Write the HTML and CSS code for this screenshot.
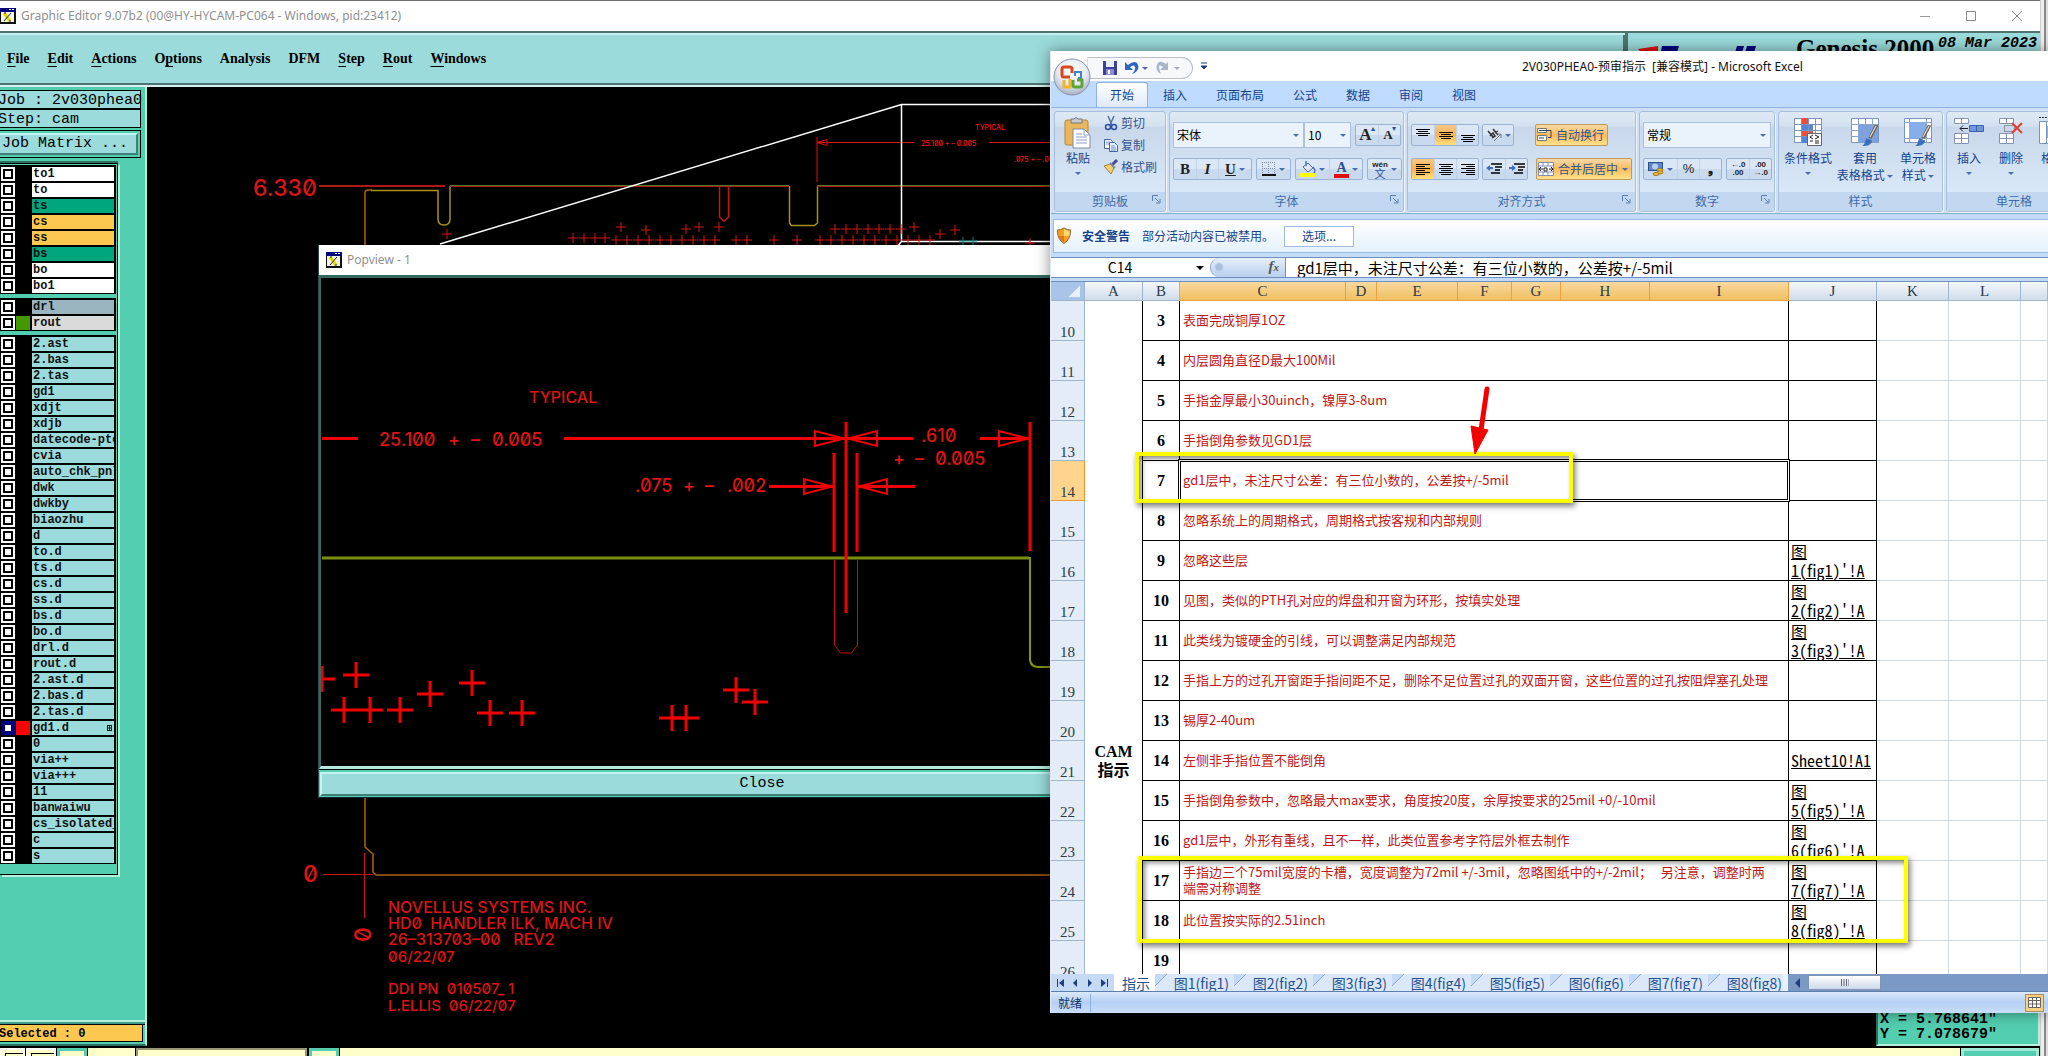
FILE: index.html
```html
<!DOCTYPE html>
<html lang="zh-CN">
<head>
<meta charset="utf-8">
<title>Graphic Editor</title>
<link rel="stylesheet" href="styles.css">
</head>
<body>
<svg width="0" height="0" class="defs" aria-hidden="true">
  <defs>
    <symbol id="xwin" viewBox="0 0 16 16"><rect width="16" height="16" fill="#111"/><rect x="0" y="0" width="15" height="4" fill="#00007a"/><path d="M9 1h2v1H9zM12 1h2v1h-2z" fill="#fff"/><rect x="1" y="4" width="13" height="10" fill="#f4f4e4"/><path d="M4 5l6 8" stroke="#e0d800" stroke-width="3"/><path d="M11 5l-7 8M4 5h2M9 13h2" stroke="#222" fill="none"/></symbol>
    <symbol id="launch" viewBox="0 0 9 9"><path d="M.5 6V.5H6" stroke="#5b7fae" fill="none"/><path d="M3 3l4 4M8 4v4H4" stroke="#5b7fae" fill="none"/></symbol>
    <symbol id="brush" viewBox="0 0 14 20"><path d="M13 0L7 12" stroke="#6d6456" stroke-width="3"/><path d="M12.500 1L7 11" stroke="#e8e2d4"/><path d="M4 12l5 2c-1 4-4 5-9 5 3-2 2-5 4-7z" fill="#3b6fb8"/></symbol>
    <marker id="plus" markerUnits="userSpaceOnUse" markerWidth="12" markerHeight="14" refX="6" refY="7"><path d="M1 7h10M6 2v10" stroke="#d81414"/></marker>
    <marker id="bigplus" markerUnits="userSpaceOnUse" markerWidth="28" markerHeight="28" refX="14" refY="14"><path d="M1 14h26M14 1v26" stroke="#f00000" stroke-width="3"/></marker>
  </defs>
</svg>

<div class="desktop">
  <div class="genesis">
    <header class="titlebar">
      <svg class="xicon"><use href="#xwin"/></svg>
      <span class="wintitle">Graphic Editor 9.07b2 (00@HY-HYCAM-PC064 - Windows, pid:23412)</span>
      <div class="controls">
        <button aria-label="Minimize"><svg width="12" height="12"><path d="M1 6.500h10" stroke="#999"/></svg></button>
        <button aria-label="Maximize"><svg width="12" height="12"><path d="M1.500 1.500h9v9h-9z" stroke="#888" fill="none"/></svg></button>
        <button aria-label="Close"><svg width="12" height="12"><path d="M1 1l10 10M11 1L1 11" stroke="#888"/></svg></button>
      </div>
    </header>
    <div class="topbar">
      <nav class="menubar">
        <button><u>F</u>ile</button><button><u>E</u>dit</button><button><u>A</u>ctions</button><button>O<u>p</u>tions</button><button>Analysis</button><button>DFM</button><button><u>S</u>tep</button><button><u>R</u>out</button><button><u>W</u>indows</button>
      </nav>
      <div class="brand">
        <svg class="logo" width="130" height="20" viewBox="0 0 130 20"><path d="M4 13L24 10v10H10z" fill="#e01010"/><path d="M28 10h17l-3 10H26zM103 10h7l-3 10h-7zM113 10h9l-3 10h-9z" fill="#000080"/></svg>
        <strong class="product">Genesis 2000</strong>
        <span class="date">08 Mar 2023</span>
      </div>
    </div>
    <div class="main">
      <aside class="side">
        <div class="field">Job : 2v030phea0</div>
        <div class="field">Step: cam</div>
        <div class="matrix"><button>Job Matrix ...</button></div>
        <div class="layers">
          <div class="group">
            <label class="layer white"><input type="checkbox"><i></i><span>to1</span></label>
            <label class="layer white"><input type="checkbox"><i></i><span>to</span></label>
            <label class="layer green"><input type="checkbox"><i></i><span>ts</span></label>
            <label class="layer amber"><input type="checkbox"><i></i><span>cs</span></label>
            <label class="layer amber"><input type="checkbox"><i></i><span>ss</span></label>
            <label class="layer green"><input type="checkbox"><i></i><span>bs</span></label>
            <label class="layer white"><input type="checkbox"><i></i><span>bo</span></label>
            <label class="layer white"><input type="checkbox"><i></i><span>bo1</span></label>
          </div>
          <div class="group">
            <label class="layer slate"><input type="checkbox"><i></i><span>drl</span></label>
            <label class="layer grey"><input type="checkbox"><i class="lime"></i><span>rout</span></label>
          </div>
          <div class="group">
            <label class="layer"><input type="checkbox"><i></i><span>2.ast</span></label>
            <label class="layer"><input type="checkbox"><i></i><span>2.bas</span></label>
            <label class="layer"><input type="checkbox"><i></i><span>2.tas</span></label>
            <label class="layer"><input type="checkbox"><i></i><span>gd1</span></label>
            <label class="layer"><input type="checkbox"><i></i><span>xdjt</span></label>
            <label class="layer"><input type="checkbox"><i></i><span>xdjb</span></label>
            <label class="layer"><input type="checkbox"><i></i><span>datecode-pte</span></label>
            <label class="layer"><input type="checkbox"><i></i><span>cvia</span></label>
            <label class="layer"><input type="checkbox"><i></i><span>auto_chk_pnl</span></label>
            <label class="layer"><input type="checkbox"><i></i><span>dwk</span></label>
            <label class="layer"><input type="checkbox"><i></i><span>dwkby</span></label>
            <label class="layer"><input type="checkbox"><i></i><span>biaozhu</span></label>
            <label class="layer"><input type="checkbox"><i></i><span>d</span></label>
            <label class="layer"><input type="checkbox"><i></i><span>to.d</span></label>
            <label class="layer"><input type="checkbox"><i></i><span>ts.d</span></label>
            <label class="layer"><input type="checkbox"><i></i><span>cs.d</span></label>
            <label class="layer"><input type="checkbox"><i></i><span>ss.d</span></label>
            <label class="layer"><input type="checkbox"><i></i><span>bs.d</span></label>
            <label class="layer"><input type="checkbox"><i></i><span>bo.d</span></label>
            <label class="layer"><input type="checkbox"><i></i><span>drl.d</span></label>
            <label class="layer"><input type="checkbox"><i></i><span>rout.d</span></label>
            <label class="layer"><input type="checkbox"><i></i><span>2.ast.d</span></label>
            <label class="layer"><input type="checkbox"><i></i><span>2.bas.d</span></label>
            <label class="layer"><input type="checkbox"><i></i><span>2.tas.d</span></label>
            <label class="layer"><input type="checkbox" checked><i class="red"></i><span class="work">gd1.d<svg width="5" height="6"><path d="M0 .5h5M0 3h5M0 5.500h5M.5 0v6M2.500 0v6M4.500 0v6" stroke="#000" stroke-width=".8"/></svg></span></label>
            <label class="layer"><input type="checkbox"><i></i><span>0</span></label>
            <label class="layer"><input type="checkbox"><i></i><span>via++</span></label>
            <label class="layer"><input type="checkbox"><i></i><span>via+++</span></label>
            <label class="layer"><input type="checkbox"><i></i><span>11</span></label>
            <label class="layer"><input type="checkbox"><i></i><span>banwaiwu</span></label>
            <label class="layer"><input type="checkbox"><i></i><span>cs_isolated_</span></label>
            <label class="layer"><input type="checkbox"><i></i><span>c</span></label>
            <label class="layer"><input type="checkbox"><i></i><span>s</span></label>
          </div>
        </div>
        <div class="selected">Selected : 0</div>
      </aside>
      <div class="canvas">
        <svg class="drawing cad" width="910" height="959" viewBox="147 87 910 959" fill="none">
          <path d="M319 186H445" stroke="#b01818" stroke-width="2"/>
          <path d="M365 798V847l8 7v18l3 3H1057M365 246V193q0-3 3-3h4" stroke="#b06010" stroke-width="1.500"/>
          <path d="M371 190.500H438V219q0 6 6 6t6-6V186M789.500 186V223l2 2.500h23l3-2.500V186" stroke="#a89018" stroke-width="1.500"/>
          <path d="M450 186.500H789M817 186.500H1057" stroke="#b01818"/><path d="M450 185.500H789M817 185.500H1057" stroke="#4d7a28"/>
          <path d="M719.500 187V217l4 4h1l4-4V187" stroke="#c81414" stroke-width="1.500"/>
          <path d="M817 137V182M817 142.500H914M989 142.500H1057M817 142.500l10-3v6z" stroke="#e01010"/>
          <path d="M440 244L901.500 104.500H1057M901.500 104V241.500H1057M901 242l-4 5" stroke="#fff" stroke-width="1.500"/>
          <polyline points="447,234 573,238 584,238 595,238 605,238 616,240 627,240 638,240 649,240 660,240 671,240 682,240 693,240 704,240 715,240 736,240 747,240 774,240 797,240 820,240 831,240 842,240 853,240 864,240 875,240 886,240 897,240 908,240 919,240 930,240 835,229 846,229 857,229 868,229 879,229 890,229 901,229 621,227 646,230 686,229 699,227 719,227 914,227 940,234 955,230 1030,243" marker-start="url(#plus)" marker-mid="url(#plus)" marker-end="url(#plus)"/>
          <path d="M959 241h18M963 237v8M973 237v8" stroke="#008080"/>
          <path d="M323 874.500H373M364.500 853V918" stroke="#c81414"/>
          <g class="t23"><text x="253" y="196">6.330</text><text x="303" y="882">0</text><text transform="translate(371 942) rotate(-90)">0</text></g>
          <g class="t7"><text x="975" y="130">TYPICAL</text><text x="921" y="146">25.100 + – 0.005</text><text x="1014" y="162">.075 + – .002</text></g>
          <g class="t16"><text x="388" y="913">NOVELLUS SYSTEMS INC.</text><text x="388" y="929">HD0&#160; HANDLER ILK, MACH IV</text><text x="388" y="945">26–313703–00&#160;&#160; REV2</text></g>
          <g class="t15"><text x="388" y="962">06/22/07</text><text x="388" y="994">DDI PN&#160; 010507_ 1</text><text x="388" y="1011">L.ELLIS&#160; 06/22/07</text></g>
        </svg>
      </div>
      <div class="readout"><div>X = 5.768641"</div><div>Y = 7.078679"</div></div>
    </div>
    <footer class="cmdbar">
      <button class="cmd" aria-label="Panel"></button><button class="cmd" aria-label="Window"></button><button class="cmd teal" aria-label="Mode"></button><span class="spacer"></span><input class="cmdline" aria-label="Command"><button class="cmd teal" aria-label="Run"></button><span class="rest"></span><button class="cmd teal last" aria-label="Stop"></button>
    </footer>
  </div>
  <div class="edge"></div>
</div>

<section class="popview">
  <header class="poptitle"><svg class="xicon"><use href="#xwin"/></svg><span class="wintitle">Popview - 1</span></header>
  <div class="popbody">
    <svg class="cad" width="736" height="488" viewBox="321 278 736 488" fill="none">
      <path d="M322 558H1029" stroke="#7a8e10" stroke-width="3"/>
      <path d="M1030 557V660q1 7 8 7h19" stroke="#86940c" stroke-width="2"/>
      <path d="M834.500 560V645l6 8h11l6-8V560" stroke="#c01010"/>
      <path d="M322 438.500H358M564 438.500H913M980 438.500H1030M769 486.500H834M857 486.500H915M846 422V613M834 453V552M857 453V552M1030 422V551" stroke="#f00000" stroke-width="3"/>
      <path d="M815 431v15l29-7.500zM877 431v15l-29-7.500zM999 431v15l29-7.500zM804 479v15l28-7.500zM887 479v15l-28-7.500z" stroke="#f00000" stroke-width="2"/>
      <polyline points="322,679 356,675 344,710 370,710 400,710 430,694 472,683 490,713 522,713 672,718 686,718 736,690 755,702" marker-start="url(#bigplus)" marker-mid="url(#bigplus)" marker-end="url(#bigplus)"/>
      <g class="t16"><text x="529" y="403">TYPICAL</text></g>
      <g class="t18"><text x="379" y="446">25.100</text><text x="448" y="446">+</text><text x="471" y="446">–</text><text x="492" y="446">0.005</text><text x="921" y="442">.610</text><text x="893" y="465">+</text><text x="915" y="465">–</text><text x="935" y="465">0.005</text><text x="635" y="492">.075</text><text x="683" y="492">+</text><text x="705" y="492">–</text><text x="727" y="492">.002</text></g>
    </svg>
  </div>
  <div class="popfoot"><button>Close</button></div>
</section>

<section class="excel">
  <header class="xtitle">
    <button class="orb" aria-label="Office"><svg width="38" height="38"><defs><radialGradient id="og" cx=".5" cy=".3" r=".7"><stop offset="0" stop-color="#fff"/><stop offset=".6" stop-color="#e4e8f0"/><stop offset="1" stop-color="#a8b0c4"/></radialGradient></defs><circle cx="19" cy="19" r="18" fill="url(#og)" stroke="#8892ac"/><g fill="none"><path d="M17 19h-6q-2 0-2-2v-6q0-2 2-2h6q2 0 2 2v4" stroke="#d8481c" stroke-width="3"/><path d="M22 18v-4h6v6h-3" stroke="#3f83cc" stroke-width="2"/><path d="M17 21v8h-6v-7" stroke="#f2b42c" stroke-width="3"/><path d="M20 22v5q0 2 2 2h5q2 0 2-2v-5h-5" stroke="#5da53a" stroke-width="3"/></g></svg></button>
    <div class="qat">
      <button aria-label="Save"><svg width="14" height="14"><path d="M0 0h14v14H0z" fill="#3f3f9f"/><path d="M3 0h8v6H3z" fill="#e8eefc"/><path d="M3 8h8v6H3z" fill="#8d8dd0"/><path d="M5 9h2v4H5z" fill="#fff"/></svg></button>
      <button aria-label="Undo"><svg width="23" height="14"><path d="M0 1v8h8L5 6q4-3 5 0t-3 7q8-3 6-9T3 4z" fill="#2f66c0"/><path d="M17 6h6l-3 3z" fill="#4a6ca8"/></svg></button>
      <button aria-label="Redo"><svg width="24" height="14"><path d="M12 1v8H4l3-3Q3 3 3 6t2 7Q-1 10 1 4t9-1z" fill="#a9b6c8"/><path d="M18 6h6l-3 3z" fill="#a0aaba"/></svg></button>
    </div>
    <button class="qmore" aria-label="Customize"><svg width="6" height="8"><path d="M0 1h6M0 4h6L3 7z" stroke="#1f3f7c" fill="#1f3f7c"/></svg></button>
    <h1>2V030PHEA0-预审指示&nbsp; [兼容模式] - Microsoft Excel</h1>
  </header>
  <nav class="tabs"><button class="on">开始</button><button>插入</button><button>页面布局</button><button>公式</button><button>数据</button><button>审阅</button><button>视图</button></nav>
  <div class="ribbon">
    <div class="rgroup g-clip">
      <div class="rbody">
        <button class="big paste"><svg width="28" height="32"><rect x="1" y="3" width="23" height="25" rx="2" fill="#e9b65c" stroke="#b88430"/><path d="M7 2h3q2-3 4 0h4v4H7z" fill="#c9ccd2" stroke="#777"/><path d="M9 12h11l6 6v13H9z" fill="#fff" stroke="#7c8ba8"/><path d="M20 12v6h6M12 17h6M12 20h11M12 23h11M12 26h11" stroke="#8ca0c4" fill="none"/></svg><span>粘贴</span><i class="car"></i></button>
        <div class="stack">
          <button><svg width="16" height="16"><path d="M5 1l4 9M11 1L7 10" stroke="#56719b" stroke-width="1.500"/><circle cx="5" cy="12" r="2.500" fill="none" stroke="#2b50a0" stroke-width="1.500"/><circle cx="11" cy="12" r="2.500" fill="none" stroke="#2b50a0" stroke-width="1.500"/></svg>剪切</button>
          <button><svg width="16" height="16"><path d="M1.500 2.500h6l2 2v7h-8z" fill="#fff" stroke="#3f64a8"/><path d="M6.500 5.500h5l3 3v6h-8z" fill="#e6effc" stroke="#3f64a8"/><path d="M8 9h4M8 11h5M8 13h5M3 5h4M3 7h3" stroke="#6d90cc"/></svg>复制</button>
          <button><svg width="16" height="16"><path d="M14 1l-5 5" stroke="#4a4aa0" stroke-width="3"/><path d="M1 7l6-2 4 4-3 6z" fill="#f0d070" stroke="#a0803c"/><path d="M7 4l5 5" stroke="#8a8a9a" stroke-width="2"/></svg>格式刷</button>
        </div>
      </div>
      <footer>剪贴板<svg><use href="#launch"/></svg></footer>
    </div>
    <div class="rgroup g-font">
      <div class="rbody rows">
        <div class="row">
          <div class="combos"><span class="combo w131"><select aria-label="字体"><option>宋体</option></select></span><span class="combo w48"><select aria-label="字号"><option>10</option></select></span></div>
          <div class="set"><button class="serif w22"><b class="s17">A</b><sup>▴</sup></button><button class="serif w22"><b class="s13">A</b><sup>▾</sup></button></div>
        </div>
        <div class="row">
          <div class="set"><button class="serif w22"><b>B</b></button><button class="serif w22"><b><em>I</em></b></button><button class="serif w34"><b><u>U</u></b><i class="car"></i></button></div>
          <div class="set"><button class="w34"><svg width="14" height="14"><path d="M.5 0v13M6.500 0v13M12.500 0v13M0 .5h13M0 6.500h13" stroke="#7b8aa4" stroke-dasharray="1 1"/><path d="M0 13h14" stroke="#111" stroke-width="2"/></svg><i class="car"></i></button></div>
          <div class="set"><button class="w34"><svg width="16" height="16"><path d="M3 6l5-4 5 5-5 4z" fill="#dfe7f4" stroke="#4f6590"/><path d="M6 0v5M13 6q3 3 1 6" stroke="#4b78c0" stroke-width="1.500" fill="none"/><path d="M0 12h15v4H0z" fill="#ffff00"/></svg><i class="car"></i></button><button class="w34 serif"><span class="fontcolor">A</span><i class="car"></i></button></div>
          <div class="set"><button class="w34"><span class="wen"><small>wén</small>文</span><i class="car"></i></button></div>
        </div>
      </div>
      <footer>字体<svg><use href="#launch"/></svg></footer>
    </div>
    <div class="rgroup g-align">
      <div class="rbody rows">
        <div class="row">
          <div class="set"><button class="w22"><svg width="14" height="14"><path d="M0 1.500h14M2 3.500h10M0 5.500h14M2 7.500h10" stroke="#000"/></svg></button><button class="w22 hot"><svg width="14" height="14"><path d="M0 4.500h14M2 6.500h10M0 8.500h14M2 10.500h10" stroke="#000"/></svg></button><button class="w22"><svg width="14" height="14"><path d="M0 7.500h14M2 9.500h10M0 11.500h14M2 13.500h10" stroke="#000"/></svg></button></div>
          <div class="set"><button class="w30"><svg width="16" height="14"><path d="M2 3l5 6M4 8l3-3 2 3-3 2M7 1l5 6M9 5l3-2" stroke="#333" fill="none" stroke-width="1.500"/><path d="M8 13l7-7M11 6h4v4" stroke="#777" fill="none"/></svg><i class="car"></i></button></div>
          <button class="hotbtn push"><svg width="16" height="14"><path d="M.5.5h9v4h-9zM.5 7.500h9v5h-9z" fill="#fff" stroke="#777"/><path d="M2 2.500h12v7h-3M2 10h5" stroke="#345" fill="none"/></svg>自动换行</button>
        </div>
        <div class="row">
          <div class="set"><button class="w22 hot"><svg width="14" height="14"><path d="M0 2.500h14M0 4.500h9M0 6.500h14M0 8.500h9M0 10.500h14M0 12.500h9" stroke="#000"/></svg></button><button class="w22"><svg width="14" height="14"><path d="M0 2.500h14M2 4.500h10M0 6.500h14M2 8.500h10M0 10.500h14M2 12.500h10" stroke="#000"/></svg></button><button class="w22"><svg width="14" height="14"><path d="M0 2.500h14M5 4.500h9M0 6.500h14M5 8.500h9M0 10.500h14M5 12.500h9" stroke="#000"/></svg></button></div>
          <div class="set"><button class="w22"><svg width="16" height="14"><path d="M5 2h11M9 5h7M9 8h5M5 11h9" stroke="#000" stroke-width="1.500"/><path d="M0 6l4-3v2h3v2H4v2z" fill="#3d6cc0"/></svg></button><button class="w22"><svg width="16" height="14"><path d="M5 2h11M9 5h7M9 8h5M5 11h9" stroke="#000" stroke-width="1.500"/><path d="M7 6L3 3v2H0v2h3v2z" fill="#3d6cc0"/></svg></button></div>
          <button class="hotbtn push"><svg width="16" height="14"><path d="M.5.5h15v13H.5zM.5 4h15M.5 10h15M5 .5V4M10 .5V4M5 10v4M10 10v4" fill="#fff" stroke="#7d90ae"/><path d="M1 7h4M15 7h-4M3 5L1 7l2 2M13 5l2 2-2 2M6 6h3v3H6z" stroke="#222" fill="none"/></svg>合并后居中<i class="car split"></i></button>
        </div>
      </div>
      <footer>对齐方式<svg><use href="#launch"/></svg></footer>
    </div>
    <div class="rgroup g-num">
      <div class="rbody rows">
        <div class="row"><span class="combo full"><select aria-label="数字格式"><option>常规</option></select></span></div>
        <div class="row">
          <div class="set"><button class="w34"><svg width="16" height="14"><rect x=".5" y=".5" width="14" height="8" fill="#5b86c8" stroke="#2f4f8c"/><circle cx="7" cy="4.500" r="3" fill="#b8d0f0"/><ellipse cx="12" cy="8" rx="3" ry="1.500" fill="#f0c040" stroke="#a07818"/><ellipse cx="12" cy="10.500" rx="3" ry="1.500" fill="#f0c040" stroke="#a07818"/><ellipse cx="8" cy="12" rx="3" ry="1.500" fill="#f0c040" stroke="#a07818"/></svg><i class="car"></i></button><button class="w22 pct">%</button><button class="w22 pct"><b>❟</b></button></div>
          <div class="set"><button class="w22 dec"><span>←.0<br>.00</span></button><button class="w22 dec"><span>.00<br>→.0</span></button></div>
        </div>
      </div>
      <footer>数字<svg><use href="#launch"/></svg></footer>
    </div>
    <div class="rgroup g-style">
      <div class="rbody">
        <button class="big w56"><svg width="30" height="30"><path d="M1.500 1.500h27v24h-27z" fill="#fff" stroke="#7a94bc"/><path d="M8 1h7v6H8zM8 14h12v6H8z" fill="#e8503c"/><path d="M8 8h12v6H8zM8 20h7v6H8z" fill="#5585d8"/><path d="M8.500 1v25M15.500 1v25M22.500 1v25M1 7.500h27M1 13.500h27M1 19.500h27" stroke="#7a94bc"/><path d="M14.500 16.500h14v12h-14z" fill="#fff" stroke="#666"/><path d="M20 18l-3 2 3 2M17 24h3M22 18l4 2-4 2M22 24h4M22 26h4" stroke="#222" fill="none"/></svg><span>条件格式</span><i class="car"></i></button>
        <button class="big w58"><svg width="30" height="30"><path d="M1.500 1.500h27v24h-27z" fill="#fff" stroke="#7a94bc"/><path d="M8 8h20v18H8z" fill="#7aa2e0"/><path d="M8.500 1v25M15.500 1v25M22.500 1v25M1 7.500h27M1 13.500h27M1 19.500h27" stroke="#8aa4cc"/><use href="#brush" x="11" y="8" width="18" height="22"/></svg><span>套用</span><span>表格格式 <i class="car"></i></span></button>
        <button class="big w48"><svg width="30" height="30"><path d="M1.500 1.500h27v24h-27z" fill="#fff" stroke="#7a94bc"/><path d="M6.500 1v25M23.500 1v25M1 5.500h27M1 21.500h27" stroke="#8aa4cc"/><path d="M6 5h17v16H6z" fill="#86aee8"/><use href="#brush" x="11" y="8" width="18" height="22"/></svg><span>单元格</span><span>样式 <i class="car"></i></span></button>
      </div>
      <footer>样式</footer>
    </div>
    <div class="rgroup g-cells">
      <div class="rbody">
        <button class="big w42"><svg width="30" height="30"><path d="M.5 1.500h14v5H.5zM7.500 1v6M.5 16.500h14v10H.5zM.5 21.500h14M7.500 16v11" fill="#fff" stroke="#8494b0"/><path d="M15.500 8.500h14v6h-14zM22.500 8v7" fill="#6f98dc" stroke="#3a64b0"/><path d="M6 11.500h8M9 8.500l-3 3 3 3" stroke="#222" fill="none"/></svg><span>插入</span><i class="car"></i></button>
        <button class="big w42"><svg width="30" height="30"><path d="M3.500 1.500h14v5h-14zM10.500 1v6M3.500 16.500h14v10h-14zM3.500 21.500h14M10.500 16v11" fill="#fff" stroke="#8494b0"/><path d="M8.500 8.500h10v6h-10z" fill="none" stroke="#445" stroke-dasharray="1 1"/><path d="M16 6l10 10M26 6L16 16" stroke="#e04030" stroke-width="2"/></svg><span>删除</span><i class="car"></i></button>
        <button class="big w42"><svg width="30" height="30"><path d="M1 .5h27" stroke="#333" stroke-dasharray="2 1"/><path d="M1.500 4.500h27v22h-27zM8.500 4v23M22.500 4v23" fill="#fff" stroke="#7a94bc"/><path d="M9 9h13v12H9z" fill="#86aee8"/></svg><span>格式</span></button>
      </div>
      <footer>单元格</footer>
    </div>
  </div>
  <div class="warn"><svg width="16" height="18"><path d="M8 1q3 2 6.500 2Q15 12 8 16.500 1 12 1.500 3 5 3 8 1z" fill="#f7a021" stroke="#8a6a3a"/><path d="M8 2q3 2 5.500 2Q14 8 13 9H8z" fill="#ffd873"/><path d="M8 9v6.500Q3 12 2.500 9z" fill="#e4761a"/></svg><b>安全警告</b><span>部分活动内容已被禁用。</span><button>选项...</button></div>
  <div class="formula">
    <input class="namebox" aria-label="名称框" value="C14"><i class="ncar"></i>
    <span class="fx"><em>f</em><small>x</small></span>
    <input class="fin" aria-label="编辑栏" value="gd1层中，未注尺寸公差：有三位小数的，公差按+/-5mil">
  </div>
  <div class="sheet">
    <table>
      <colgroup><col class="c-r"><col class="c-a"><col class="c-b"><col class="c-c"><col class="c-d"><col class="c-e"><col class="c-f"><col class="c-g"><col class="c-h"><col class="c-i"><col class="c-j"><col class="c-k"><col class="c-k"><col></colgroup>
      <thead><tr><th class="corner"></th><th>A</th><th>B</th><th class="sel">C</th><th class="sel">D</th><th class="sel">E</th><th class="sel">F</th><th class="sel">G</th><th class="sel">H</th><th class="sel">I</th><th>J</th><th>K</th><th>L</th><th></th></tr></thead>
      <tbody>
        <tr><th>10</th><td rowspan="23" class="cam">CAM<br>指示</td><td class="n">3</td><td colspan="7" class="t">表面完成铜厚1OZ</td><td class="l"></td><td></td><td></td><td></td></tr>
        <tr><th>11</th><td class="n">4</td><td colspan="7" class="t">内层圆角直径D最大100Mil</td><td class="l"></td><td></td><td></td><td></td></tr>
        <tr><th>12</th><td class="n">5</td><td colspan="7" class="t">手指金厚最小30uinch，镍厚3-8um</td><td class="l"></td><td></td><td></td><td></td></tr>
        <tr><th>13</th><td class="n">6</td><td colspan="7" class="t">手指倒角参数见GD1层</td><td class="l"></td><td></td><td></td><td></td></tr>
        <tr><th class="sel">14</th><td class="n">7</td><td colspan="7" class="t active">gd1层中，未注尺寸公差：有三位小数的，公差按+/-5mil</td><td class="l"></td><td></td><td></td><td></td></tr>
        <tr><th>15</th><td class="n">8</td><td colspan="7" class="t">忽略系统上的周期格式，周期格式按客规和内部规则</td><td class="l"></td><td></td><td></td><td></td></tr>
        <tr><th>16</th><td class="n">9</td><td colspan="7" class="t">忽略这些层</td><td class="l"><a href="#fig1">图<br>1(fig1)'!A</a></td><td></td><td></td><td></td></tr>
        <tr><th>17</th><td class="n">10</td><td colspan="7" class="t">见图，类似的PTH孔对应的焊盘和开窗为环形，按填实处理</td><td class="l"><a href="#fig2">图<br>2(fig2)'!A</a></td><td></td><td></td><td></td></tr>
        <tr><th>18</th><td class="n">11</td><td colspan="7" class="t">此类线为镀硬金的引线，可以调整满足内部规范</td><td class="l"><a href="#fig3">图<br>3(fig3)'!A</a></td><td></td><td></td><td></td></tr>
        <tr><th>19</th><td class="n">12</td><td colspan="7" class="t">手指上方的过孔开窗距手指间距不足，删除不足位置过孔的双面开窗，这些位置的过孔按阻焊塞孔处理</td><td class="l"></td><td></td><td></td><td></td></tr>
        <tr><th>20</th><td class="n">13</td><td colspan="7" class="t">锡厚2-40um</td><td class="l"></td><td></td><td></td><td></td></tr>
        <tr><th>21</th><td class="n">14</td><td colspan="7" class="t">左侧非手指位置不能倒角</td><td class="l"><a href="#s10">Sheet10!A1</a></td><td></td><td></td><td></td></tr>
        <tr><th>22</th><td class="n">15</td><td colspan="7" class="t">手指倒角参数中，忽略最大max要求，角度按20度，余厚按要求的25mil +0/-10mil</td><td class="l"><a href="#fig5">图<br>5(fig5)'!A</a></td><td></td><td></td><td></td></tr>
        <tr><th>23</th><td class="n">16</td><td colspan="7" class="t">gd1层中，外形有重线，且不一样，此类位置参考字符层外框去制作</td><td class="l"><a href="#fig6">图<br>6(fig6)'!A</a></td><td></td><td></td><td></td></tr>
        <tr><th>24</th><td class="n">17</td><td colspan="7" class="t">手指边三个75mil宽度的卡槽，宽度调整为72mil +/-3mil，忽略图纸中的+/-2mil；&nbsp;&nbsp; 另注意，调整时两<br>端需对称调整</td><td class="l"><a href="#fig7">图<br>7(fig7)'!A</a></td><td></td><td></td><td></td></tr>
        <tr><th>25</th><td class="n">18</td><td colspan="7" class="t">此位置按实际的2.51inch</td><td class="l"><a href="#fig8">图<br>8(fig8)'!A</a></td><td></td><td></td><td></td></tr>
        <tr><th>26</th><td class="n">19</td><td colspan="7" class="t"></td><td class="l"></td><td></td><td></td><td></td></tr>
        <tr><th></th><td class="n"></td><td colspan="7"></td><td></td><td></td><td></td><td></td></tr>
        <tr><th></th><td class="n"></td><td colspan="7"></td><td></td><td></td><td></td><td></td></tr>
        <tr><th></th><td class="n"></td><td colspan="7"></td><td></td><td></td><td></td><td></td></tr>
        <tr><th></th><td class="n"></td><td colspan="7"></td><td></td><td></td><td></td><td></td></tr>
        <tr><th></th><td class="n"></td><td colspan="7"></td><td></td><td></td><td></td><td></td></tr>
        <tr><th></th><td class="n"></td><td colspan="7"></td><td></td><td></td><td></td><td></td></tr>
      </tbody>
    </table>
    <div class="mark m1"></div>
    <div class="mark m2"></div>
    <svg class="arrow" width="24" height="72"><path d="M18 5L12 46" stroke="#f40000" stroke-width="5" stroke-linecap="round"/><path d="M2 42l17 4L6 70z" fill="#f40000" stroke="#f40000"/></svg>
  </div>
  <div class="sheetbar">
    <div class="nav"><button aria-label="First"><svg width="8" height="8"><path d="M1 0h1v8H1zM8 0v8L3 4z" fill="#1f3f7c"/></svg></button><button aria-label="Previous"><svg width="8" height="8"><path d="M6 0v8L2 4z" fill="#1f3f7c"/></svg></button><button aria-label="Next"><svg width="8" height="8"><path d="M2 0v8l4-4z" fill="#1f3f7c"/></svg></button><button aria-label="Last"><svg width="8" height="8"><path d="M6 0h1v8H6zM0 0v8l5-4z" fill="#1f3f7c"/></svg></button></div>
    <div class="stabs"><button class="on">指示</button><button>图1(fig1)</button><button>图2(fig2)</button><button>图3(fig3)</button><button>图4(fig4)</button><button>图5(fig5)</button><button>图6(fig6)</button><button>图7(fig7)</button><button>图8(fig8)</button></div>
    <div class="hscroll"><svg width="8" height="10"><path d="M6 0v10L1 5z" fill="#1f3f7c"/></svg><span class="thumb"><svg width="8" height="7"><path d="M.5 0v7M3 0v7M5.500 0v7M8 0v7" stroke="#667"/></svg></span></div>
  </div>
  <footer class="status"><span>就绪</span><button class="viewbtn" aria-label="普通"><svg width="13" height="11"><path d="M.5.5h12v10H.5zM4.500 0v11M8.500 0v11M0 3.500h13M0 7h13" stroke="#666" fill="#fff"/></svg></button></footer>
</section>
</body>
</html>
```
FILE: styles.css
```css
* { box-sizing: border-box; }
body { margin: 0; height: 100vh; overflow: hidden; position: relative; background: #000; font: 12px/16px "Noto Sans CJK SC", sans-serif; }
button { border: 0; padding: 0; margin: 0; background: none; font: inherit; color: inherit; }
.defs { position: absolute; }
svg { display: block; flex: none; }

/* Genesis main window */
.desktop { display: flex; height: 100vh; }
.genesis { flex: 1; min-width: 0; display: flex; flex-direction: column; border-top: 1px solid #707070; }
.edge { width: 8px; background: linear-gradient(90deg, #ccc 0 1px, #eee 1px 4px, #888 4px 6px, #ddd 6px); }
.titlebar { height: 30px; background: #fff; display: flex; align-items: center; gap: 5px; }
.xicon { width: 16px; height: 16px; }
.wintitle { font: 12px/16px "Noto Sans", "Open Sans", sans-serif; color: #8f8f8f; }
.controls { margin-left: auto; margin-right: 17px; display: flex; gap: 34px; }
.topbar { display: flex; height: 56px; background: #9bdbdb; }
.menubar { flex: 1; display: flex; align-items: center; gap: 18px; padding-left: 7px; border-top: 2px solid #4f7370; border-bottom: 2px solid #d8f0f0; box-shadow: inset 0 2px #c8eeee, inset 0 -2px #4f7370, inset -2px 0 #4f7370; font: bold 14px/18px "Liberation Serif", serif; color: #000; }
.menubar u { text-underline-offset: 3px; }
.brand { width: 415px; border-top: 2px solid #4f7370; border-left: 3px solid #4f7370; display: flex; align-items: flex-start; padding: 3px 0 0 6px; overflow: hidden; }
.product { font: bold 25px/26px "Liberation Serif", serif; margin-left: 32px; width: 142px; white-space: nowrap; }
.date { font: italic bold 15px/16px "Liberation Mono", monospace; white-space: nowrap; }
.main { flex: 1; min-height: 0; display: flex; }
.side { width: 147px; background: #53ceb0; border-right: 2px solid #b4f0dc; border-bottom: 2px solid #2f6f62; padding: 3px 0 0; display: flex; flex-direction: column; overflow: hidden; }
.field { height: 19px; border: 1px solid #000; border-left: 0; background: #9bdbdb; font: 15px/19px "Liberation Mono", monospace; color: #000; margin-right: 4px; white-space: pre; text-indent: -2px; }
.matrix { height: 28px; margin: 2px 4px 0 0; padding: 2px 2px 2px 0; border: 1px solid #000; border-left: 0; }
.matrix button { width: 100%; height: 22px; text-align: left; padding-left: 2px; background: #9bdbdb; border: solid; border-width: 2px 2px 2px 0; border-color: #c4f4f0 #3f7f74 #3f7f74; font: 15px/18px "Liberation Mono", monospace; }
.layers { margin: 5px 27px 0 0; padding: 1px 2px 10px 0; border-right: 1px solid #000; border-bottom: 1px solid #000; border-top: 1px solid #000; box-shadow: 2px 2px #b4f0dc, 0 -2px #2f6f62; display: flex; flex-direction: column; gap: 4px; }
.group { background: #000; padding-top: 1px; width: 116px; }
.layer { display: flex; height: 16px; gap: 1px; padding: 1px 0 1px 1px; }
.layer input { appearance: none; width: 14px; height: 14px; margin: 0; background: linear-gradient(#fff, #fff) center/6px 6px no-repeat, linear-gradient(#000, #000) center/10px 10px no-repeat, #fff; }
.layer input:checked { background: linear-gradient(#fff, #fff) center/6px 6px no-repeat, #000080; }
.layer i { width: 14px; }
.layer span { flex: none; width: 82px; margin-left: 1px; height: 14px; padding-left: 1px; background: #9bdbdb; overflow: hidden; white-space: nowrap; font: bold 12px/14px "Liberation Mono", monospace; color: #111; }
.layer i.lime { background: #449800; }
.layer i.red { background: #f00; }
.layer .work { display: flex; justify-content: space-between; align-items: center; padding-right: 2px; }
.white span { background: #fff; }
.green span { background: #00a67c; }
.amber span { background: #fdc850; }
.slate span { background: #9ab4c0; }
.grey span { background: #dadada; }
.selected { margin-top: auto; height: 24px; border-top: 2px solid #b4f0dc; background: #fdc850; box-shadow: inset 0 2px #3f9a86, inset 0 3px #000, inset -2px -2px #53ceb0, inset -3px -3px #000; font: bold 12px/24px "Liberation Mono", monospace; white-space: pre; text-indent: -1px; }
.canvas { flex: 1; min-width: 0; overflow: hidden; background: #000; }
.cad text { fill: #dc1414; font-family: Inter, sans-serif; font-weight: 500; font-feature-settings: "zero"; white-space: pre; }
.t23 text { font-size: 23px; }
.t18 text { font-size: 18px; }
.t16 text { font-size: 16px; }
.t15 text { font-size: 15px; }
.cad .t7 text { font-size: 7px; fill: #f81414; }
.readout { width: 164px; display: flex; flex-direction: column; justify-content: flex-end; padding: 0 0 2px 2px; background: #53ceb0; border: 2px solid #b4f0dc; border-left-color: #2f6f62; font: bold 15px/15px "Liberation Mono", monospace; }
.cmdbar { height: 10px; border-top: 2px solid #000; background: #ffffcc; display: flex; overflow: hidden; flex: none; }
.cmd { width: 30px; height: 20px; margin-right: 1px; border: 2px solid #fff; outline: 1px solid #000; box-shadow: inset 3px 3px #ffffcc, inset 4px 4px #000, inset -4px 0 #ffffcc; background: #ffffcc; }
.cmd:first-child { width: 25px; }
.cmd.teal { background: #ffffcc; border: 3px solid #53ceb0; box-shadow: none; }
.spacer { width: 48px; }
.cmdline { width: 171px; height: 20px; border: 2px solid #99997a; background: #ffffcc; margin-right: 2px; outline: 1px solid #000; }
.rest { flex: 1; }
.cmd.last { width: 78px; background: #53ceb0; border-color: #9fe8d4; }

/* Popview window */
.popview { position: absolute; left: 318px; top: 245px; width: 888px; height: 553px; display: flex; flex-direction: column; background: #53ceb0; border-left: 1px solid #2a4f48; border-bottom: 1px solid #123; }
.poptitle { height: 30px; background: #fff; display: flex; align-items: center; gap: 5px; padding-left: 7px; }
.popbody { flex: 1; overflow: hidden; background: #000; border-top: 3px solid #35685f; border-left: 2px solid #35685f; border-bottom: 3px solid #b4e8dc; }
.popfoot { height: 28px; border-top: 1px solid #000; padding: 2px 2px 2px 1px; }
.popfoot button { width: 100%; height: 24px; background: #9bdbdb; border: 2px solid #c4f4f0; border-bottom-color: #3f7f74; font: 15px/20px "Liberation Mono", monospace; color: #000; }

/* Excel window */
.excel { position: absolute; left: 1050px; right: 0; top: 51px; bottom: 43px; background: #c3dbf7; border-left: 1px solid #dfe9f6; display: flex; flex-direction: column; box-shadow: 0 0 14px rgba(0, 0, 0, .45); overflow: hidden; color: #15428b; }
.xtitle { height: 30px; background: #fff; position: relative; flex: none; display: flex; align-items: center; }
.orb { position: absolute; left: 2px; top: 7px; z-index: 2; }
.qat { margin-left: 36px; padding-left: 15px; width: 106px; height: 22px; border: 1px solid #b9bec8; border-left-color: #dde; border-radius: 0 11px 11px 0; background: #f6f8fb; display: flex; align-items: center; gap: 8px; margin-top: 3px; }
.qmore { margin-left: 8px; }
.xtitle h1 { margin: 0; position: absolute; left: 471px; top: 8px; font: 12px/16px "Noto Sans", "Noto Sans CJK SC", sans-serif; color: #111; white-space: nowrap; }
.tabs { height: 26px; background: #bfdbff; flex: none; display: flex; gap: 1px; padding: 1px 0 0 45px; }
.tabs button { height: 25px; padding: 0 14px; }
.tabs .on { background: linear-gradient(#fff, #dfeaf7); border: 1px solid #8db2e3; border-bottom: 0; border-radius: 3px 3px 0 0; padding: 0 13px; }
.ribbon { height: 107px; flex: none; display: flex; gap: 3px; padding: 3px 0 2px 3px; border-top: 1px solid #8db2e3; border-bottom: 1px solid #7fb0c8; background: #cfe0f4; overflow: hidden; }
.rgroup { flex: none; height: 101px; border: 1px solid #a6bfdd; border-radius: 3px; background: linear-gradient(#dfe9f5 0, #d3e1f0 14px, #c8d8ea 15px, #d9e8f8 80px); display: flex; flex-direction: column; box-shadow: 1px 1px #eef5fd; }
.rbody { flex: 1; display: flex; min-height: 0; }
.rgroup footer { height: 19px; background: #c2d8f0; color: #3e6aaa; text-align: center; line-height: 17px; position: relative; border-radius: 0 0 2px 2px; }
.rgroup footer svg { position: absolute; right: 4px; top: 3px; width: 9px; height: 9px; }
.g-clip { width: 112px; } .g-font { width: 235px; } .g-align { width: 229px; } .g-num { width: 136px; } .g-style { width: 165px; } .g-cells { width: 136px; }
.car { display: inline-block; border: 3px solid transparent; border-top-color: #4a6ca8; border-bottom: 0; vertical-align: middle; }
.big { display: flex; flex-direction: column; align-items: center; padding-top: 5px; white-space: nowrap; flex: none; }
.big svg { margin-bottom: 2px; }
.big span { line-height: 17px; }
.big > .car { margin-top: 6px; }
.paste { width: 46px; }
.paste svg { margin-bottom: 0; }
.w56 { width: 56px; } .w58 { width: 58px; } .w48 { width: 48px; } .w42 { width: 42px; }
.g-style .rbody, .g-cells .rbody { padding-left: 1px; }
.stack { display: flex; flex-direction: column; padding: 0 0 0 2px; }
.stack button { height: 22px; display: flex; align-items: center; gap: 2px; color: #33558e; white-space: nowrap; }
.rows { flex-direction: column; padding: 10px 3px 0; gap: 8px; }
.row { display: flex; gap: 4px; height: 26px; align-items: center; }
.combos { display: flex; }
.combo { position: relative; height: 26px; display: block; }
.combo::after { content: ""; position: absolute; right: 5px; top: 12px; border: 3px solid transparent; border-top-color: #4a6ca8; border-bottom: 0; }
.combo select { appearance: none; width: 100%; height: 26px; border: 1px solid #abc1de; background: #eaf2fb; font: 12px/16px "Noto Sans CJK SC", sans-serif; color: #000; padding: 0 3px; border-radius: 0; }
.w131 { width: 131px; } .w48.combo { width: 47px; } .full { width: 128px; }
.set { display: flex; height: 22px; border: 1px solid #9ab3d5; border-radius: 2px; background: linear-gradient(#dbe7f5 50%, #c9daee 50%); }
.set button { height: 20px; display: flex; align-items: center; justify-content: center; gap: 3px; color: #222; }
.set button + button { border-left: 1px solid #c0d2e8; }
.w22 { width: 22px; } .w30 { width: 30px; } .w34 { width: 33px; }
.serif { font: 15px/18px "Liberation Serif", serif; }
.s17 { font-size: 17px; }
.s13 { font-size: 13px; }
.serif sup { font-size: 8px; line-height: 8px; align-self: flex-start; margin-left: -4px; color: #2b50a0; }
.fontcolor { font-weight: bold; color: #2f4f8c; line-height: 14px; border-bottom: 4px solid #e01010; padding: 0 2px; font-size: 14px; height: 17px; }
.wen { font-size: 11px; line-height: 9px; color: #2b50a0; display: flex; flex-direction: column; align-items: center; }
.wen small { font: bold 8px/8px "Liberation Sans", sans-serif; color: #222; }
.pct { font: 13px/16px "Liberation Sans", sans-serif; }
.dec { font: bold 8px/8px "Liberation Sans", sans-serif; }
.hot { background: linear-gradient(#f8c888, #fbb04c 50%, #ffe07c); }
.hotbtn { height: 22px; display: flex; align-items: center; gap: 3px; padding: 0 3px 0 1px; border: 1px solid #c09a5c; background: linear-gradient(#f8d9a6, #fbbb5e 50%, #ffe28a); border-radius: 2px; color: #33558e; white-space: nowrap; }
.push { margin-left: auto; }
.row:first-child .push { margin-right: 24px; }
.g-align .row { gap: 3px; }
.g-align .row:nth-child(2) .push { gap: 4px; }
.warn { height: 34px; margin: 5px 0 0 2px; flex: none; border: 1px solid #9dbbe0; border-right: 0; background: linear-gradient(#fff, #e4f1fc); display: flex; align-items: center; padding-left: 2px; }
.warn b { margin: 0 12px 0 10px; }
.warn button { margin-left: 10px; width: 70px; height: 21px; border: 1px solid #9dbbe0; background: #fff; }
.formula { height: 21px; flex: none; margin-top: 4px; background: #fff; border: 1px solid #6f8fbd; border-width: 1px 0; display: flex; align-items: center; position: relative; color: #000; }
.formula input { border: 0; padding: 0; background: none; height: 19px; color: #000; font: 15px/19px "Noto Sans CJK SC", sans-serif; outline: 0; }
.formula .namebox { width: 138px; text-align: center; font-size: 14px; }
.ncar { border: 4px solid transparent; border-top-color: #000; border-bottom: 0; margin-left: 7px; }
.fx { width: 76px; height: 19px; margin-left: 6px; border-radius: 9px 0 0 9px; border-left: 1px solid #8aa5cc; border-right: 1px solid #6f8fbd; background: radial-gradient(circle at 8px 9px, #a9bfdd 3px, transparent 5px), linear-gradient(#e6effa, #b9d0ee); text-align: right; padding-right: 6px; font: bold 15px/16px "Liberation Serif", serif; color: #555; }
.fx small { font-size: 11px; font-style: italic; }
.fin { flex: 1; margin-left: 11px; }
.sheet { flex: 1; min-height: 0; overflow: hidden; position: relative; background: #fff; margin-top: 3px; border-top: 1px solid #6f8fbd; }
table { table-layout: fixed; width: 100%; border-collapse: separate; border-spacing: 0; }
.c-r { width: 34px; } .c-a { width: 58px; } .c-b { width: 37px; } .c-c { width: 166px; } .c-d { width: 31px; } .c-e { width: 81px; } .c-f { width: 54px; } .c-g { width: 49px; } .c-h { width: 89px; } .c-i { width: 139px; } .c-j { width: 88px; } .c-k { width: 72px; }
th { padding: 0; font: 15px/15px "Liberation Serif", serif; color: #2b3a4a; border: 0 solid #9eb6ce; border-width: 0 1px 1px 0; }
thead th { height: 19px; background: linear-gradient(#f4f8fc, #d0dcea); }
thead .sel { background: linear-gradient(#f8d9a0, #f0c060); border-color: #e8a040; }
thead .corner { background: linear-gradient(135deg, transparent 50%, #e8f0fa 50%) 18px 4px/11px 11px no-repeat, #a9c4e9; }
tbody th { height: 40px; background: #e4ecf7; vertical-align: bottom; }
tbody th.sel { background: #ffd58d; border-color: #f29536; }
td { height: 40px; padding: 0; border: 0 solid #d0d7e5; border-width: 0 1px 1px 0; }
.cam { border-right-color: #000; text-align: center; font: bold 16px/19px "Liberation Serif", "Noto Sans CJK SC", serif; color: #000; }
.n { border-color: #000; text-align: center; font: bold 16px/18px "Liberation Serif", serif; color: #000; }
.t { border-color: #000; padding: 0 0 1px 3px; font: 13px/16px "Noto Sans CJK SC", sans-serif; color: #c01818; white-space: nowrap; }
.l { border-color: #000; padding: 0 0 0 2px; color: #000; white-space: nowrap; }
.l a { display: block; font: 16px/19px "Noto Sans CJK SC", sans-serif; font-feature-settings: "hwid"; color: #000; text-underline-offset: 1px; }
.active { position: relative; }
.active::after { content: ""; position: absolute; inset: -2px; box-shadow: inset 0 0 0 1px #000, inset 0 0 0 2px #fff, inset 0 0 0 3px #000; }
.mark { position: absolute; border: 4px solid #ffff00; box-shadow: 2px 3px 6px rgba(0, 0, 0, .55), inset 3px 3px 5px rgba(0, 0, 0, .45); }
.m1 { left: 84px; top: 170px; width: 438px; height: 51px; }
.m2 { left: 87px; top: 574px; width: 770px; height: 87px; }
.arrow { position: absolute; left: 418px; top: 102px; }
.sheetbar { height: 17px; flex: none; display: flex; background: #7a99c4; overflow: hidden; }
.nav { width: 63px; background: #c5daf5; display: flex; align-items: center; gap: 7px; padding-left: 5px; }
.stabs { width: 674px; background: #c5daf5; display: flex; overflow: hidden; flex: none; border-right: 5px solid #e8f0fb; }
.stabs button { flex: none; width: 79px; height: 17px; text-align: right; padding-right: 5px; white-space: nowrap; font: 14px/16px "Noto Sans CJK SC", sans-serif; color: #25508f; background: linear-gradient(135deg, transparent 8px, #8aa5cc 8px 9px, #dbe8f9 9px); }
.stabs .on { width: 41px; background: #fff; }
.hscroll { display: flex; align-items: center; padding-left: 6px; gap: 6px; }
.thumb { width: 73px; height: 15px; border: 1px solid #8294b4; background: linear-gradient(#fff, #ccd8ea); display: flex; align-items: center; justify-content: center; }
.status { height: 22px; flex: none; border-top: 1px solid #5b7fae; background: linear-gradient(#dce9fb, #b4d0f5 50%, #c9defa); display: flex; align-items: center; padding: 0 4px 0 7px; color: #15305f; }
.status span { border-right: 1px solid #8fb0dc; padding-right: 8px; line-height: 18px; }
.viewbtn { margin-left: auto; width: 19px; height: 18px; border: 1px solid #a88c5c; background: #fcd080; display: flex; align-items: center; justify-content: center; }
```
